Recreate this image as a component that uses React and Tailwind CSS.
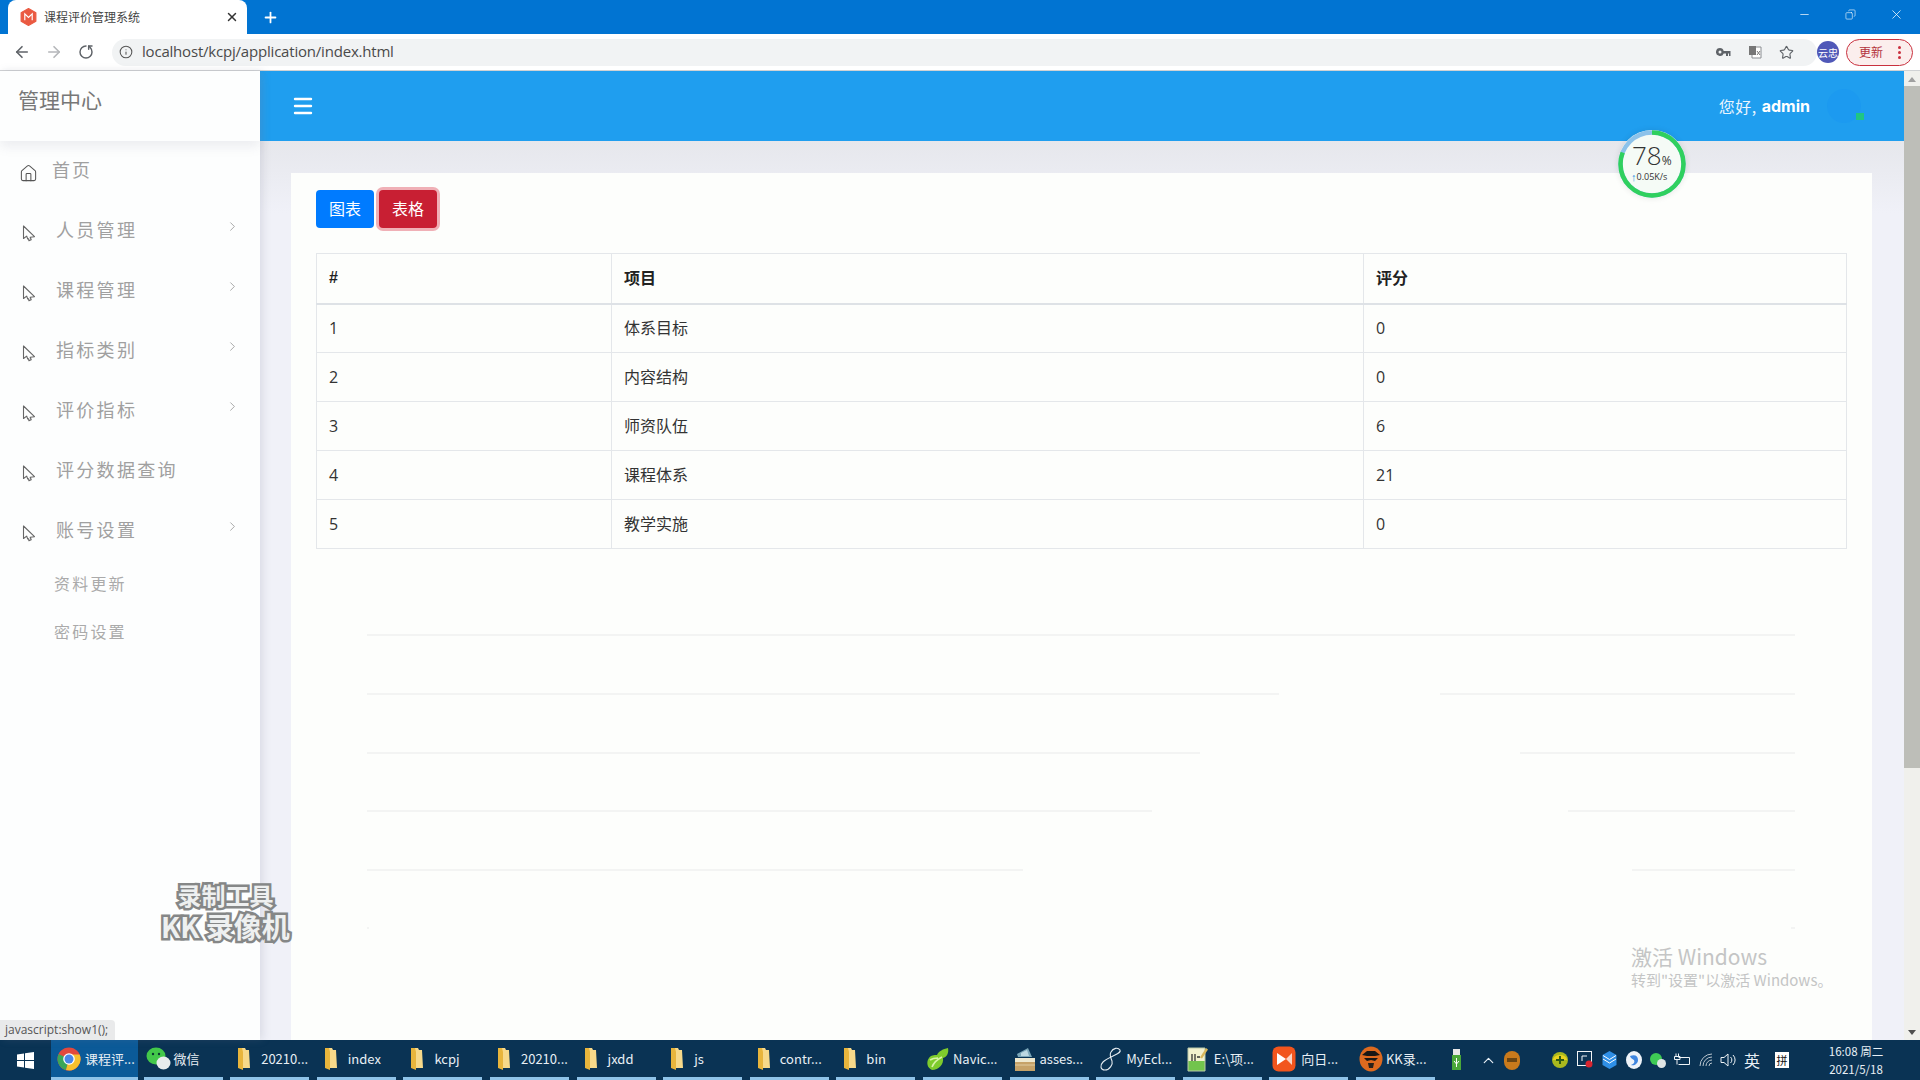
import { Menu, Home, ChevronRight, ArrowLeft, ArrowRight, RotateCw, Info, Star, X, Plus, Minus, Copy, ChevronUp } from 'lucide-react'

const cjk = "font-['Noto_Sans_CJK_SC','Noto_Sans',sans-serif]"

const navItems = [
  { label: '人员管理', arrow: true },
  { label: '课程管理', arrow: true },
  { label: '指标类别', arrow: true },
  { label: '评价指标', arrow: true },
  { label: '评分数据查询', arrow: false },
  { label: '账号设置', arrow: true },
]

const rows = [
  [1, '体系目标', 0],
  [2, '内容结构', 0],
  [3, '师资队伍', 6],
  [4, '课程体系', 21],
  [5, '教学实施', 0],
]

const chartLines = [
  { y: 74, parts: [[51, 1479]] },
  { y: 133, parts: [[51, 963], [1124, 1479]] },
  { y: 192, parts: [[51, 884], [1204, 1479]] },
  { y: 250, parts: [[51, 836], [1252, 1479]] },
  { y: 309, parts: [[51, 707], [1316, 1479]] },
  { y: 367, parts: [[51, 53], [1475, 1479]] },
]

function CursorIcon() {
  return (
    <svg width="14" height="17" viewBox="0 0 14 17" fill="none" stroke="#666" strokeWidth="1.1" className="shrink-0">
      <path d="M1.500 1v12.500l3.200-2.400 1 2.900 1-.2.200 2 2.300-1-1-2.500 4.300-.6z" strokeLinejoin="round" />
    </svg>
  )
}

function FolderIcon() {
  return (
    <svg width="16" height="24" viewBox="0 0 16 24" className="shrink-0">
      <path d="M2 1h7l1 2h3l1 18H2z" fill="#f7d98a" />
      <path d="M2 1h4l1 4v18l-5-2z" fill="#e8b53c" />
    </svg>
  )
}

function ChromeIcon() {
  return (
    <svg width="24" height="24" viewBox="0 0 24 24" className="shrink-0">
      <circle cx="12" cy="12" r="11.500" fill="#e2483d" />
      <path d="M12 12 1.600 7A11.500 11.500 0 0 0 9 23.100z" fill="#3ba658" />
      <path d="M12 12 9 23.100A11.500 11.500 0 0 0 22.600 7.500H12z" fill="#f6c02e" />
      <circle cx="12" cy="12" r="5.800" fill="#fff" />
      <circle cx="12" cy="12" r="4.500" fill="#4a86e8" />
    </svg>
  )
}

function WechatIcon() {
  return (
    <svg width="25" height="24" viewBox="0 0 25 24" className="shrink-0">
      <ellipse cx="10" cy="9" rx="9.500" ry="8.500" fill="#43c84a" />
      <circle cx="7" cy="7" r="1.200" fill="#0b3a30" />
      <circle cx="13" cy="7" r="1.200" fill="#0b3a30" />
      <ellipse cx="17.500" cy="16" rx="7" ry="6.500" fill="#e8ecec" />
    </svg>
  )
}

function NavicatIcon() {
  return (
    <svg width="24" height="24" viewBox="0 0 24 24" className="shrink-0">
      <path d="M22 1c1 5-1 9-5 10 1 6-4 12-11 12C1 21 0 15 3 11c2-3 5-3 8-3 2-4 6-6 11-7z" fill="#7ecb2c" />
      <path d="M6 20c2-5 6-8 10-10M4 13c3-2 5-2 8-2" stroke="#d7f2a5" strokeWidth="1.600" fill="none" />
    </svg>
  )
}

function BoxIcon() {
  return (
    <svg width="24" height="26" viewBox="0 0 24 26" className="shrink-0">
      <path d="M4 8l11-6 4 9H5z" fill="#7aa6b8" />
      <path d="M8 7l6-3 2 6H8z" fill="#bcd8e2" />
      <path d="M2 12h20v4H2z" fill="#eee8cf" />
      <path d="M2 16h20v9H2z" fill="#c6a268" />
      <path d="M2 19h20" stroke="#e0cba0" />
    </svg>
  )
}

function EclipseIcon() {
  return (
    <svg width="24" height="26" viewBox="0 0 24 26" fill="none" stroke="#e4ebf0" strokeWidth="1.100" className="shrink-0">
      <path d="M21 4c-2-3-7-2-9 2-2 3 0 6 1 9s-2 9-7 9c-5 0-5-5-2-8s8-5 12-7 6-3 5-5z" />
    </svg>
  )
}

function NoteIcon() {
  return (
    <svg width="22" height="26" viewBox="0 0 22 26" className="shrink-0">
      <path d="M1 2h17v23H1z" fill="#f2f1cf" />
      <path d="M1 15h17v10H1z" fill="#72c44d" />
      <path d="M1 2h17v23H1z" fill="none" stroke="#b9c9a7" />
      <path d="M5 8v7M8 8v7M10 11h3" stroke="#333" strokeWidth="1.300" />
      <path d="M19 2l2 1.500-6 9-2-1z" fill="#d8b75a" />
    </svg>
  )
}

function SunIcon() {
  return (
    <svg width="24" height="26" viewBox="0 0 24 26" className="shrink-0">
      <rect x="0.500" y="0.500" width="23" height="25" rx="6" fill="#f2551d" />
      <path d="M5 7l9 6-9 6z" fill="#fff" />
      <path d="M20 7l-6 6 6 6z" fill="#fbd3c2" />
    </svg>
  )
}

function KkIcon() {
  return (
    <svg width="24" height="26" viewBox="0 0 24 26" className="shrink-0">
      <ellipse cx="12" cy="13" rx="11.500" ry="12.500" fill="#dd6a1f" />
      <path d="M3 9l5-4h8l5 4-5 1H8z" fill="#191715" />
      <path d="M5 12h14l-3 3-4-1-4 1z" fill="#191715" />
      <path d="M9 17h6l-1 5h-4z" fill="#2a211a" />
    </svg>
  )
}

const taskItems = [
  { label: '课程评...', icon: <ChromeIcon />, cls: 'w-[87px] -mr-[2px] bg-[#0b5a98] pl-[6px] gap-[4px]' },
  { label: '微信', icon: <WechatIcon />, cls: 'w-[79px] pl-[2px] gap-[3px]' },
  { label: '20210...', icon: <FolderIcon />, cls: 'w-[79px] pl-[6px] gap-[9px]' },
  { label: 'index', icon: <FolderIcon />, cls: 'w-[79px] pl-[6px] gap-[9px]' },
  { label: 'kcpj', icon: <FolderIcon />, cls: 'w-[79px] pl-[6px] gap-[9px]' },
  { label: '20210...', icon: <FolderIcon />, cls: 'w-[79px] pl-[6px] gap-[9px]' },
  { label: 'jxdd', icon: <FolderIcon />, cls: 'w-[79px] pl-[6px] gap-[9px]' },
  { label: 'js', icon: <FolderIcon />, cls: 'w-[79px] pl-[6px] gap-[9px]' },
  { label: 'contr...', icon: <FolderIcon />, cls: 'w-[79px] pl-[6px] gap-[8px]' },
  { label: 'bin', icon: <FolderIcon />, cls: 'w-[79px] pl-[6px] gap-[8px]' },
  { label: 'Navic...', icon: <NavicatIcon />, cls: 'w-[79px] pl-[3px] gap-[3px]' },
  { label: 'asses...', icon: <BoxIcon />, cls: 'w-[79px] pl-[3px] gap-[3px]' },
  { label: 'MyEcl...', icon: <EclipseIcon />, cls: 'w-[79px] pl-[3px] gap-[3px]' },
  { label: 'E:\\项...', icon: <NoteIcon />, cls: 'w-[79px] pl-[4px] gap-[5px]' },
  { label: '向日...', icon: <SunIcon />, cls: 'w-[79px] pl-[3px] gap-[5px]' },
  { label: 'KK录...', icon: <KkIcon />, cls: 'w-[79px] pl-[3px] gap-[3px]' },
]

function TitleBar() {
  return (
    <div className="h-[34px] shrink-0 bg-[#0174d2] flex items-end pl-2 text-white">
      <div className="h-[34px] w-[239px] bg-white rounded-t-lg flex items-center pl-[12px] pr-2 text-[#444]">
        <svg width="17" height="18" viewBox="0 0 16 17" className="shrink-0">
          <path d="M8 .5l7 4v8l-7 4-7-4v-8z" fill="#ea5a42" strokeLinejoin="round" stroke="#ea5a42" />
          <path d="M4.500 11.500v-6L8 9l3.500-3.500v6" stroke="#fff" strokeWidth="1.100" fill="none" />
        </svg>
        <span className={`ml-[7px] text-[12px] ${cjk}`}>课程评价管理系统</span>
        <X size={14} strokeWidth={2.500} className="ml-auto text-[#333]" />
      </div>
      <Plus size={17} strokeWidth={2.500} className="ml-[15px] mb-[8px]" />
      <div className="ml-auto h-full flex items-center pb-[5px] text-white">
        <Minus size={13} strokeWidth={1.300} className="mr-[34px]" />
        <Copy size={11} strokeWidth={1.300} className="mr-[33px] -scale-x-100" />
        <X size={15} strokeWidth={1.200} className="mr-[16px]" />
      </div>
    </div>
  )
}

function AddressBar() {
  return (
    <div className="h-[37px] shrink-0 bg-white border-b border-[#d0d2d4] flex items-center text-[#5f6368]">
      <ArrowLeft size={18} strokeWidth={2.200} className="ml-[13px]" />
      <ArrowRight size={18} strokeWidth={2.200} className="ml-[14px] text-[#b5b7ba]" />
      <RotateCw size={16} strokeWidth={2.200} className="ml-[15px] -scale-x-100 rotate-90" />
      <div className="ml-[18px] h-[27px] w-[1705px] bg-[#f1f3f4] rounded-full flex items-center pl-[7px]">
        <Info size={14} strokeWidth={1.800} className="text-[#555]" />
        <span className="ml-[9px] -mt-[2px] text-[15px] text-[#4a4a4a] font-['Open_Sans',sans-serif] tracking-[-0.2px]">localhost/kcpj/application/index.html</span>
        <svg width="15" height="9" viewBox="0 0 15 9" className="ml-auto mr-[17px]" fill="#5f6368">
          <path d="M4 0a4 4 0 1 0 3.700 5.500H10V8h2V5.500h1V8h1.500V3H7.700A4 4 0 0 0 4 0zm0 2.500a1.500 1.500 0 1 1 0 3 1.500 1.500 0 0 1 0-3z" />
        </svg>
        <svg width="14" height="14" viewBox="0 0 14 14" className="mr-[17px]">
          <path d="M4 2h9v11H4z" fill="#fff" stroke="#8a8d91" />
          <path d="M1 1h7v9H1z" fill="#777" />
          <path d="M9 6l3 4M12 6l-3 4" stroke="#777" />
        </svg>
        <Star size={15} strokeWidth={1.800} className="mr-[23px]" />
      </div>
      <div className={`ml-0 w-[22px] h-[22px] rounded-full bg-[#5058b8] text-white text-[10px] flex items-center justify-center shrink-0 ${cjk}`}>云忠</div>
      <div className={`ml-[7px] h-[27px] w-[67px] shrink-0 rounded-full border border-[#c9303e] bg-[#fbeeed] text-[#b3323c] text-[12px] flex items-center justify-between pl-[12px] pr-[11px] ${cjk}`}>
        <span>更新</span>
        <span className="flex flex-col gap-[2px]">
          <span className="w-[3px] h-[3px] rounded-full bg-[#c9303e]" />
          <span className="w-[3px] h-[3px] rounded-full bg-[#c9303e]" />
          <span className="w-[3px] h-[3px] rounded-full bg-[#c9303e]" />
        </span>
      </div>
    </div>
  )
}

function Sidebar() {
  return (
    <aside className={`w-[260px] shrink-0 bg-[#fdfefe] shadow-[3px_0_8px_rgba(120,125,150,0.18)] z-10 relative flex flex-col ${cjk}`}>
      <div className="h-[70px] shrink-0 pl-[18px] pt-[14px] text-[21px] leading-[28px] text-[#777] shadow-[0_6px_10px_rgba(120,125,150,0.12)]">管理中心</div>
      <div className="h-[60px] flex items-center pl-[19px] text-[18px] tracking-[2px] text-[#a0a0a0]">
        <Home size={19} strokeWidth={1.300} className="text-[#555] mt-[4px]" />
        <span className="ml-[14px] -mt-[4px]">首页</span>
      </div>
      {navItems.map((item) => (
        <div key={item.label} className="h-[60px] flex items-center pl-[22px] text-[18px] tracking-[2.300px] text-[#a0a0a0] relative">
          <span className="mt-[5px] flex"><CursorIcon /></span>
          <span className="ml-[20px] -mt-[4px]">{item.label}</span>
          {item.arrow && <ChevronRight size={15} strokeWidth={1} className="absolute left-[225px] top-[18px] text-[#777]" />}
        </div>
      ))}
      <div className="h-[48px] pl-[54px] -mt-[2px] flex items-center text-[16px] tracking-[2.200px] text-[#aaa]">资料更新</div>
      <div className="h-[48px] pl-[54px] flex items-center text-[16px] tracking-[2.200px] text-[#aaa]">密码设置</div>
      <div className="absolute left-0 bottom-0 h-[20px] w-[115px] bg-[#e9eaeb] rounded-tr text-[12px] leading-[20px] text-[#555] pl-[5px] font-['Open_Sans',sans-serif]">javascript:show1();</div>
    </aside>
  )
}

function Header() {
  return (
    <div className="h-[70px] shrink-0 bg-[#1f9eef] flex items-center pl-[31px] text-white">
      <Menu size={24} strokeWidth={2.400} />
      <div className="ml-auto flex items-center">
        <span className={`text-[16px] text-[#eaf5fe] tracking-[0.5px] ${cjk}`}>您好, </span>
        <span className="ml-[5px] text-[16px] font-bold font-['Inter',sans-serif]">admin</span>
        <div className="ml-[17px] mr-[43px] w-[34px] h-[34px] rounded-full bg-[#1c9af0] relative">
          <span className="absolute -right-[3px] bottom-[3px] w-[8px] h-[7px] bg-[#20c683]" />
        </div>
      </div>
    </div>
  )
}

function SpeedWidget() {
  return (
    <div className="absolute left-[1358px] top-[59px] w-[68px] h-[68px] z-20 rounded-full bg-[#f5fbf6] shadow-[0_0_6px_rgba(0,0,0,0.1)] text-[#333]">
      <svg width="68" height="68" viewBox="0 0 68 68" className="absolute inset-0 -rotate-90">
        <circle cx="34" cy="34" r="31.500" fill="none" stroke="#8cc2ea" strokeWidth="4.500" />
        <circle cx="34" cy="34" r="31.500" fill="none" stroke="#2fd05e" strokeWidth="4.500" strokeDasharray="160 198" />
      </svg>
      <div className="absolute left-[14px] top-[11px] flex items-baseline font-['Open_Sans',sans-serif] font-light">
        <span className="text-[26px] leading-[28px]">78</span>
        <span className="text-[12px] font-normal">%</span>
      </div>
      <div className="absolute left-[13px] top-[41px] text-[9px] leading-[12px] flex items-center whitespace-nowrap font-['Open_Sans',sans-serif]">
        <span className="text-[#2a8fe0] font-bold text-[11px]">↑</span>0.05K/s
      </div>
    </div>
  )
}

function ScoreTable() {
  return (
    <table className={`mt-[25px] w-[1531px] table-fixed border-collapse text-[16px] text-[#333] ${cjk}`}>
      <thead>
        <tr className="h-[50px] border-b-2 border-[#dee2e6] text-[#222]">
          <th className="w-[295px] border border-[#e4e7ea] border-b-2 border-b-[#dee2e6] px-3 text-left font-bold font-['Liberation_Sans',sans-serif]">#</th>
          <th className="w-[752px] border border-[#e4e7ea] border-b-2 border-b-[#dee2e6] px-3 text-left font-bold"><span className="inline-block -translate-y-px">项目</span></th>
          <th className="border border-[#e4e7ea] border-b-2 border-b-[#dee2e6] px-3 text-left font-bold"><span className="inline-block -translate-y-px">评分</span></th>
        </tr>
      </thead>
      <tbody>
        {rows.map((r) => (
          <tr key={r[0]} className="h-[49px]">
            <td className="border border-[#e4e7ea] px-3 font-['Open_Sans',sans-serif]">{r[0]}</td>
            <td className="border border-[#e4e7ea] px-3"><span className="inline-block -translate-y-px">{r[1]}</span></td>
            <td className="border border-[#e4e7ea] px-3 font-['Open_Sans',sans-serif]">{r[2]}</td>
          </tr>
        ))}
      </tbody>
    </table>
  )
}

function TrayIcons() {
  return (
    <>
      <svg width="11" height="22" viewBox="0 0 11 22" className="mr-[18px]">
        <rect x="2" y="0" width="7" height="6" fill="#e8e8e8" />
        <rect x="1" y="6" width="9" height="15" fill="#4aa83a" />
        <path d="M5.500 9v9M3 12l2.500 3L8 12" stroke="#fff" fill="none" />
      </svg>
      <ChevronUp size={17} strokeWidth={1.700} className="mr-[7px]" />
      <span className="w-[16px] h-[19px] rounded-full bg-[#c97a1c] mr-[32px] flex items-center justify-center"><span className="w-[10px] h-[4px] bg-[#6b4512]" /></span>
      <svg width="16" height="16" viewBox="0 0 16 16" className="mr-[9px]">
        <circle cx="8" cy="8" r="8" fill="#a9b81e" />
        <path d="M1 8a7 5 0 0 1 14 0" fill="#e9d21f" />
        <path d="M8 4v8M4 8h8" stroke="#2f5a14" strokeWidth="2" />
      </svg>
      <svg width="16" height="18" viewBox="0 0 16 18" className="mr-[9px]">
        <rect x="0.500" y="0.500" width="14" height="14" fill="#0b3354" stroke="#f2f5f7" />
        <path d="M5 10V5h5" stroke="#f2f5f7" fill="none" />
        <circle cx="12" cy="13" r="3.500" fill="#d9252f" />
      </svg>
      <svg width="15" height="18" viewBox="0 0 15 18" className="mr-[9px]">
        <path d="M7.500 0l7 4v10l-7 4-7-4V4z" fill="#2f8fe6" />
        <path d="M1 8l6.500 4L14 8M1 4.500l6.500 4 6.500-4" stroke="#fff" fill="none" />
      </svg>
      <svg width="16" height="18" viewBox="0 0 16 18" className="mr-[8px]">
        <ellipse cx="8" cy="9" rx="8" ry="9" fill="#eef3f9" />
        <path d="M4 5c5-2 8 0 8 4 0 4-4 6-7 5 3-1 4-3 3-5-1-1-3-1-4-4z" fill="#3f86e0" />
      </svg>
      <svg width="16" height="15" viewBox="0 0 16 15" className="mr-[8px]">
        <circle cx="6" cy="6" r="6" fill="#3ecb55" />
        <circle cx="11.500" cy="10.500" r="4.500" fill="#dfe5e5" />
      </svg>
      <svg width="16" height="14" viewBox="0 0 16 14" fill="none" stroke="#eef3f6" className="mr-[9px]">
        <path d="M4.500 4.500h11v7h-11M2 .5v3M4.500 .5v3M.5 3.500h5.500v3h-5.500zM3 6.500v5" />
      </svg>
      <svg width="16" height="14" viewBox="0 0 16 14" fill="none" stroke="#b9c5ce" className="mr-[5px]">
        <path d="M1 13A12 12 0 0 1 13 1M4 13a9 9 0 0 1 9-9M7 13a6 6 0 0 1 6-6M10 13a3 3 0 0 1 3-3" />
      </svg>
      <svg width="16" height="16" viewBox="0 0 16 16" fill="none" stroke="#eef3f6" className="mr-[7px]">
        <path d="M1 5.500h3L8 2v12L4 10.500H1zM10.500 5a4 4 0 0 1 0 6M13 3a7 7 0 0 1 0 10" />
      </svg>
    </>
  )
}

function Taskbar() {
  return (
    <div className={`h-[40px] shrink-0 bg-[#0a3354] flex text-[#e8eff5] text-[13px] ${cjk}`}>
      <div className="w-[51px] flex items-center justify-center">
        <svg width="17" height="17" viewBox="0 0 17 17" fill="#fff">
          <path d="M0 2.500l7-1v6.500H0zM8 1.300l9-1.300v8H8zM0 9h7v6.500l-7-1zM8 9h9v8l-9-1.300z" />
        </svg>
      </div>
      <div className="flex gap-[7.600px]">
        {taskItems.map((t, i) => (
          <div key={i} className={`h-[40px] flex items-center border-b-[3px] border-[#8fc3e8] overflow-hidden whitespace-nowrap ${t.cls}`}>
            {t.icon}
            <span>{t.label}</span>
          </div>
        ))}
      </div>
      <div className="ml-auto flex items-center pr-[34px]">
        <TrayIcons />
        <span className="text-[16px] mr-[15px] ml-[1px]">英</span>
        <span className="w-[14px] h-[16px] bg-white text-[#111] text-[11px] leading-[16px] text-center mr-[37px]">拼</span>
        <div className="w-[60px] text-center text-[11.500px] leading-[18px]">
          <div className="whitespace-nowrap">16:08 周二</div>
          <div className="whitespace-nowrap">2021/5/18</div>
        </div>
      </div>
    </div>
  )
}

export default function App() {
  return (
    <div className="h-screen w-screen overflow-hidden flex flex-col bg-white">
      <TitleBar />
      <AddressBar />
      <div className="flex-1 min-h-0 flex">
        <Sidebar />
        <main className="flex-1 min-w-0 bg-[#f0f1f8] flex flex-col relative overflow-hidden">
          <Header />
          <SpeedWidget />
          <div className="flex-1 min-h-0 pl-[31px] pr-[32px] pt-[32px] bg-gradient-to-b from-[#e6e7ec] to-[#f0f1f8] to-[8%]">
            <div className={`h-[900px] bg-[#fdfefc] pl-[25px] pt-[17px] ${cjk}`}>
              <div className="flex gap-[5px] text-[16px] text-white">
                <button className="w-[58px] h-[38px] pb-[2px] rounded bg-[#007bff]">图表</button>
                <button className="w-[58px] h-[38px] pb-[2px] rounded bg-[#c81f33] shadow-[0_0_0_3px_rgba(225,83,97,0.45)]">表格</button>
              </div>
              <ScoreTable />
              <svg width="1531" height="400" className="mt-[12px] block" stroke="#e9eaea" strokeWidth="1">
                {chartLines.map((l) =>
                  l.parts.map((p) => <line key={l.y + '-' + p[0]} x1={p[0]} x2={p[1]} y1={l.y} y2={l.y} />),
                )}
              </svg>
            </div>
          </div>
          {/* activation note sits over the page */}
          <div className={`absolute left-[1371px] top-[871px] text-[#c4c5c5] ${cjk}`}>
            <div className="text-[21px] leading-[28px]">激活 Windows</div>
            <div className="text-[15px] leading-[20px]">转到"设置"以激活 Windows。</div>
          </div>
        </main>
        <div className="w-[16px] shrink-0 bg-[#f0f0ec] flex flex-col items-center">
          <span className="mt-[6px] w-0 h-0 border-x-[4px] border-x-transparent border-b-[5px] border-b-[#a0a0a0]" />
          <span className="mt-[4px] w-full h-[682px] bg-[#bdbeb8]" />
          <span className="mt-auto mb-[5px] w-0 h-0 border-x-[4px] border-x-transparent border-t-[5px] border-t-[#505050]" />
        </div>
      </div>
      <Taskbar />
      {/* recorder watermark */}
      <div className={`absolute left-[161px] top-[880px] z-30 flex flex-col items-center font-bold text-[#eef0f0] [-webkit-text-stroke:5px_#858787] [paint-order:stroke] whitespace-nowrap ${cjk}`}>
        <div className="text-[24px] leading-[30px]">录制工具</div>
        <div className="text-[28px] leading-[32px]">KK 录像机</div>
      </div>
    </div>
  )
}
